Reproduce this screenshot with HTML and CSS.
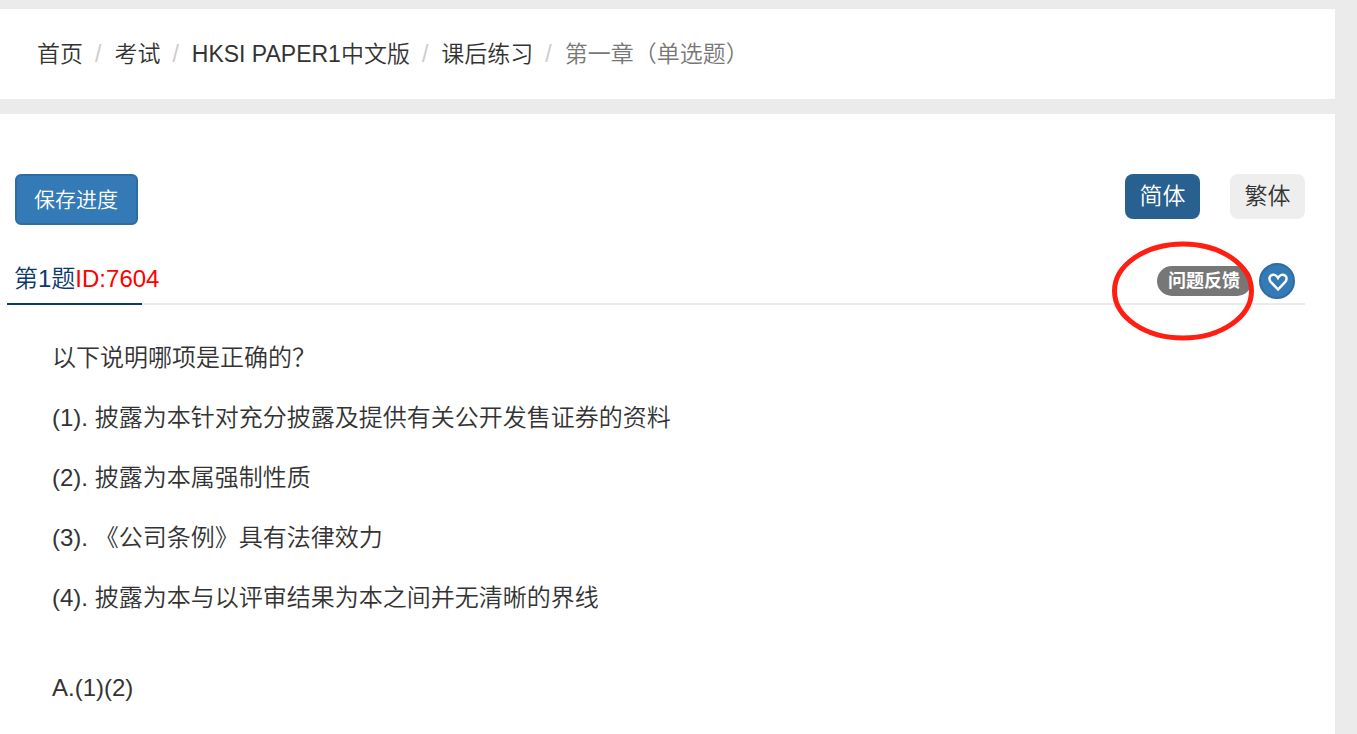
FILE: index.html
```
<!DOCTYPE html>
<html lang="zh-CN">
<head>
  <meta charset="UTF-8" />
  <title>第一章（单选题）</title>
  <link rel="stylesheet" href="styles.css">
</head>
<body>
  <nav class="crumb-bar">
    <ol class="breadcrumb">
      <li><a href="#">首页</a></li>
      <li><a href="#">考试</a></li>
      <li><a href="#">HKSI PAPER1中文版</a></li>
      <li><a href="#">课后练习</a></li>
      <li class="active">第一章（单选题）</li>
    </ol>
  </nav>

  <main class="panel">
    <div class="toolbar">
      <button type="button" class="btn-save">保存进度</button>
      <div class="lang-switch">
        <button type="button" class="btn-lang selected">简体</button>
        <button type="button" class="btn-lang">繁体</button>
      </div>
    </div>

    <div class="question-head">
      <h1 class="question-tab">第1题<span class="question-id">ID:7604</span></h1>
      <div class="question-tools">
        <a href="#" class="badge">问题反馈</a>
        <button type="button" class="btn-fav" aria-label="收藏">
          <svg class="heart" viewBox="0 0 20 18" aria-hidden="true">
            <path d="M10 16.500 L3 9.200 C0.800 6.800 1.100 4 2.700 2.700 C5 1 8 1.500 10 5 C12 1.500 15 1 17.300 2.700 C18.900 4 19.200 6.800 17 9.200 Z" />
          </svg>
        </button>
        <svg class="marker" viewBox="0 0 142 100" aria-hidden="true">
          <ellipse cx="71" cy="50" rx="68.500" ry="47" />
        </svg>
      </div>
    </div>

    <div class="question-body">
      <p>以下说明哪项是正确的？</p>
      <p>(1). 披露为本针对充分披露及提供有关公开发售证券的资料</p>
      <p>(2). 披露为本属强制性质</p>
      <p>(3). 《公司条例》具有法律效力</p>
      <p>(4). 披露为本与以评审结果为本之间并无清晰的界线</p>
      <p class="option">A.(1)(2)</p>
    </div>
  </main>
</body>
</html>
```
FILE: styles.css
```
* {
  box-sizing: border-box;
}
body {
  display: flex;
  flex-direction: column;
  gap: 15px;
  min-height: 100vh;
  margin: 0;
  padding: 9px 22px 0 0;
  background-color: #ebebeb;
  color: #333;
  font-family: "Liberation Sans", "Noto Sans CJK SC", sans-serif;
  font-size: 24px;
  font-weight: 350;
}
a {
  color: inherit;
  text-decoration: none;
}
button {
  font-family: inherit;
  font-weight: inherit;
  cursor: pointer;
}

/* Breadcrumb */
.crumb-bar {
  padding: 30px 37px;
  background-color: #fff;
}
.breadcrumb {
  display: flex;
  flex-wrap: wrap;
  margin: 0;
  padding: 0;
  list-style: none;
  font-size: 23px;
  line-height: 30px;
}
.breadcrumb li + li::before {
  content: "/";
  padding: 0 13px 0 12px;
  color: #ccc;
}
.breadcrumb .active {
  color: #777;
}

/* Main panel */
.panel {
  flex: 1;
  padding: 60px 30px 0 15px;
  background-color: #fff;
}
.toolbar {
  display: flex;
  justify-content: space-between;
  align-items: flex-start;
}
.btn-save {
  padding: 8px 18px 8px 17px;
  border: 2px solid #2e6da4;
  border-radius: 6px;
  background-color: #337ab7;
  color: #fff;
  font-size: 21px;
  line-height: 31px;
}
.lang-switch {
  display: flex;
  gap: 30px;
}
.btn-lang {
  width: 75px;
  height: 45px;
  padding: 0 0 5px;
  border: 0;
  border-radius: 8px;
  background-color: #eee;
  color: #333;
  font-size: 23px;
}
.btn-lang.selected {
  background-color: #286090;
  color: #fff;
}

/* Question header */
.question-head {
  display: flex;
  justify-content: space-between;
  margin: 30px 0 0 -8px;
  border-bottom: 2px solid #ebebeb;
}
.question-tab {
  width: 135px;
  margin: 0 0 -2px;
  padding: 6px 0 6px 7px;
  border-bottom: 2px solid #0a3a6e;
  color: #0a3a6e;
  font-size: 24px;
  font-weight: inherit;
  line-height: 36px;
  white-space: nowrap;
}
.question-id {
  color: #f00;
}
.question-tools {
  position: relative;
  display: flex;
  align-items: center;
  gap: 7px;
  padding: 4px 10px 0 0;
}
.badge {
  padding: 0 12px 0 11px;
  border-radius: 15px;
  background-color: #777;
  color: #fff;
  font-size: 18px;
  font-weight: bold;
  line-height: 30px;
}
.btn-fav {
  display: flex;
  align-items: center;
  justify-content: center;
  width: 36px;
  height: 36px;
  padding: 2px 0 0 2px;
  border: 2px solid #2e6da4;
  border-radius: 50%;
  background-color: #337ab7;
}
.heart {
  width: 20px;
  height: 18px;
  fill: none;
  stroke: #fff;
  stroke-width: 2.5;
}
/* hand-drawn circle around the feedback badge */
.marker {
  position: absolute;
  top: -14px;
  right: 51px;
  width: 142px;
  height: 100px;
  fill: none;
  stroke: #ff1f12;
  stroke-width: 5;
  pointer-events: none;
}

/* Question text */
.question-body {
  padding: 38px 37px 0;
}
.question-body p {
  margin: 0 0 30px;
  line-height: 30px;
}
.question-body .option {
  margin-top: 60px;
}
```
